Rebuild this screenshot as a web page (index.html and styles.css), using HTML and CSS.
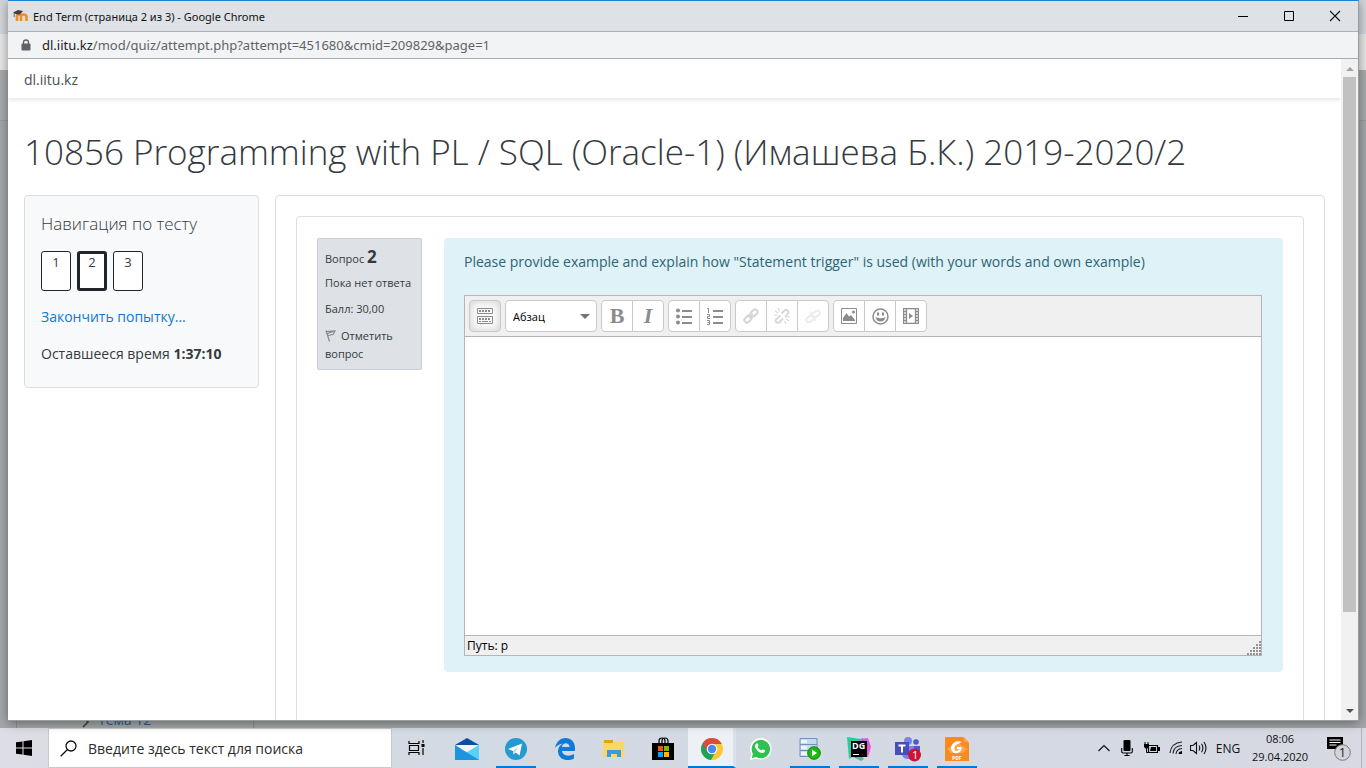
FILE: index.html
```html
<!DOCTYPE html>
<html lang="ru">
<head>
<meta charset="utf-8">
<meta name="viewport" content="width=device-width, initial-scale=1">
<title>End Term (страница 2 из 3)</title>
<link rel="stylesheet" href="styles.css">
</head>
<body>
<div class="desktop">
  <div class="workspace">
    <div class="backdrop" aria-hidden="true">
      <div class="backdrop-tabs"></div>
      <div class="backdrop-bar"></div>
      <div class="backdrop-nav"></div>
      <div class="backdrop-page">
        <div class="backdrop-drawer"><svg width="8" height="12" viewBox="0 0 8 12"><path d="M1 1l5 5-5 5" fill="none" stroke="#3d4042" stroke-width="1.5"/></svg><span>Тема 12</span></div>
      </div>
    </div>

    <section class="window">
      <header class="titlebar">
        <svg class="favicon" width="16" height="14" viewBox="0 0 16 14"><path d="M4 12V7.500Q4 5.500 6 5.500T8 7.500V12M8 12V7.500Q8 5.500 10.500 5.500T13.500 7.500V12" fill="none" stroke="#f6892b" stroke-width="2.600"/><path d="M0 3.500L5 1l5 1-3 3.500-4-.2z" fill="#45403d"/><path d="M1.200 4v4" stroke="#6d625c"/></svg>
        <span class="window-title">End Term (страница 2 из 3) - Google Chrome</span>
        <button class="win-btn" aria-label="Свернуть"><svg width="12" height="12" viewBox="0 0 12 12"><path d="M1 6.500h10" stroke="#000"/></svg></button>
        <button class="win-btn" aria-label="Развернуть"><svg width="12" height="12" viewBox="0 0 12 12"><path d="M1.500 1.500h9v9h-9z" fill="none" stroke="#000"/></svg></button>
        <button class="win-btn" aria-label="Закрыть"><svg width="12" height="12" viewBox="0 0 12 12"><path d="M1 1l10 10M11 1L1 11" stroke="#111" stroke-width="1.100"/></svg></button>
      </header>
      <div class="urlbar">
        <svg width="10" height="12" viewBox="0 0 10 12"><path d="M2.500 5V3.500a2.500 2.500 0 0 1 5 0V5" fill="none" stroke="#5f6368" stroke-width="1.300"/><rect x=".5" y="4.500" width="9" height="7" rx="1" fill="#5f6368"/></svg>
        <span class="url"><span class="url-host">dl.iitu.kz</span>/mod/quiz/attempt.php?attempt=451680&amp;cmid=209829&amp;page=1</span>
      </div>

      <div class="viewport">
        <div class="page">
          <nav class="navbar"><a class="brand" href="#">dl.iitu.kz</a></nav>
          <h1 class="course-title">10856 Programming with PL / SQL (Oracle-1) (Имашева Б.К.) 2019-2020/2</h1>
          <div class="columns">
            <aside class="quiz-nav">
              <h2 class="quiz-nav-title">Навигация по тесту</h2>
              <div class="quiz-nav-pages">
                <a class="page-btn" href="#">1</a>
                <a class="page-btn page-btn-current" href="#">2</a>
                <a class="page-btn" href="#">3</a>
              </div>
              <a class="finish" href="#">Закончить попытку...</a>
              <div class="timer">Оставшееся время <b>1:37:10</b></div>
            </aside>
            <main class="region">
              <div class="card">
                <div class="info">
                  <h3 class="info-no">Вопрос <b>2</b></h3>
                  <div class="info-state">Пока нет ответа</div>
                  <div class="info-grade">Балл: 30,00</div>
                  <a class="info-flag" href="#"><svg width="12" height="13" viewBox="0 0 12 13"><path d="M1 1.500L4.500 12.500M1.500 2.500L10 2 8 5.500 3 6.500M2.500 4.500L8 2.500" fill="none" stroke="#85888c" stroke-width="1.200"/></svg>Отметить вопрос</a>
                </div>
                <div class="formulation">
                  <label class="question" for="answer">Please provide example and explain how "Statement trigger" is used (with your words and own example)</label>
                  <div class="editor">
                    <div class="toolbar">
                      <div class="group group-active"><button class="tool" aria-label="Переключатель панели"><svg width="16" height="16" viewBox="0 0 16 16"><path d="M.5.500h15v5H.5zM.5 8.500h15v7H.5z" fill="none" stroke="#8c8c8c"/><path d="M2 3h12" stroke="#8c8c8c" stroke-width="2" stroke-dasharray="2 1"/><path d="M2 11h12" stroke="#8c8c8c" stroke-width="2" stroke-dasharray="2 1"/><path d="M2 13.500h2M5 13.500h6M12 13.500h2" stroke="#8c8c8c"/></svg></button></div>
                      <div class="group format">
                        <select class="format-select" aria-label="Формат"><option>Абзац</option></select>
                        <svg class="format-arrow" width="10" height="5" viewBox="0 0 10 5"><path d="M0 0h10L5 5z" fill="#767676"/></svg>
                      </div>
                      <div class="group">
                        <button class="tool tool-bold">B</button>
                        <button class="tool tool-italic">I</button>
                      </div>
                      <div class="group">
                        <button class="tool" aria-label="Маркированный список"><svg width="17" height="17" viewBox="0 0 17 17"><g fill="#8c8c8c"><circle cx="2" cy="2.500" r="2"/><circle cx="2" cy="8.500" r="2"/><circle cx="2" cy="14.500" r="2"/><path d="M6 2h10v2H6zM6 8h10v2H6zM6 14h10v2H6z"/></g></svg></button>
                        <button class="tool" aria-label="Нумерованный список"><svg width="17" height="17" viewBox="0 0 17 17"><path d="M6 2h10v2H6zM6 8h10v2H6zM6 14h10v2H6z" fill="#8c8c8c"/><path d="M0 .500h1.500V5M0 6.500h2.500v2H.5v2H3M0 12.500h2.500v4H0M.5 14.500h2" fill="none" stroke="#8c8c8c"/></svg></button>
                      </div>
                      <div class="group">
                        <button class="tool" disabled aria-label="Ссылка"><svg width="16" height="16" viewBox="0 0 16 16"><g fill="none" stroke="#d5d5d5" stroke-width="2"><rect x="-4" y="-2.500" width="8" height="5" rx="2.500" transform="translate(5 11) rotate(-45)"/><rect x="-4" y="-2.500" width="8" height="5" rx="2.500" transform="translate(11 5) rotate(-45)"/><path d="M6 10l4-4"/></g></svg></button>
                        <button class="tool" disabled aria-label="Удалить ссылку"><svg width="16" height="16" viewBox="0 0 16 16"><g fill="none" stroke="#d8d8d8" stroke-width="2"><path d="M6.500 7.500L2 11.500q-1 1.500.5 2.700t3 .3L9 10.500M7.500 5.500l3-3q1.500-1.300 3 0t.5 3l-3 3.500"/><path d="M1 3l3 2M4 0l1.500 3.500M0 7h3M12 16l-1.500-3M15 13l-3-2M16 9h-3" stroke-width="1.200"/></g></svg></button>
                        <button class="tool" disabled aria-label="Запретить автоссылки"><svg width="16" height="16" viewBox="0 0 16 16"><g fill="none" stroke="#ececec" stroke-width="2"><rect x="-4" y="-2.500" width="8" height="5" rx="2.500" transform="translate(5 11) rotate(-35)"/><rect x="-4" y="-2.500" width="8" height="5" rx="2.500" transform="translate(11 6) rotate(-35)"/><path d="M5 4l6 9"/></g></svg></button>
                      </div>
                      <div class="group">
                        <button class="tool" aria-label="Изображение"><svg width="16" height="16" viewBox="0 0 16 16"><path d="M.5.500h15v15H.5z" fill="none" stroke="#8c8c8c"/><path d="M2 13V10l3.500-5L8 8.500 10 7l4 5v1z" fill="#8c8c8c"/><circle cx="12.500" cy="4" r="1.500" fill="#8c8c8c"/></svg></button>
                        <button class="tool" aria-label="Смайлик"><svg width="17" height="17" viewBox="0 0 17 17"><circle cx="8.500" cy="8.500" r="7.500" fill="none" stroke="#8c8c8c" stroke-width="1.500"/><path d="M5 4.500h2v3H5zM10 4.500h2v3h-2z" fill="#8c8c8c"/><path d="M3.500 9q5 2.500 10 0-1 4.500-5 4.500T3.500 9z" fill="#8c8c8c"/></svg></button>
                        <button class="tool" aria-label="Медиа"><svg width="16" height="16" viewBox="0 0 16 16"><path d="M.5.500h15v15H.5zM3.500.500v15M12.500.500v15M.5 3.500h3M.5 6.500h3M.5 9.500h3M.5 12.500h3M12.500 3.500h3M12.500 6.500h3M12.500 9.500h3M12.500 12.500h3" fill="none" stroke="#8c8c8c" stroke-width="1.300"/><path d="M6 5v6l4-3z" fill="#8c8c8c"/></svg></button>
                      </div>
                    </div>
                    <textarea class="answer" id="answer"></textarea>
                    <div class="statusbar"><span>Путь: p</span>
                      <svg width="14" height="14" viewBox="0 0 14 14"><path d="M12 1h2M9 4h5M6 7h8M3 10h11M0 13h14" stroke="#929292" stroke-width="2" stroke-dasharray="2 1"/></svg>
                    </div>
                  </div>
                </div>
              </div>
            </main>
          </div>
        </div>
        <div class="scrollbar" aria-hidden="true">
          <svg width="8" height="4" viewBox="0 0 8 4"><path d="M4 0l4 4H0z" fill="#a3a3a3"/></svg>
          <div class="track"><div class="thumb"></div></div>
          <svg width="8" height="4" viewBox="0 0 8 4"><path d="M0 0h8L4 4z" fill="#505050"/></svg>
        </div>
      </div>
    </section>
  </div>

  <footer class="taskbar">
    <button class="start" aria-label="Пуск"><svg width="16" height="16" viewBox="0 0 16 16"><path d="M0 2.300l6.500-.9v6.100H0zM7.500 1.200L16 0v7.500H7.500zM0 8.500h6.500v6.100L0 13.700zM7.500 8.500H16V16l-8.500-1.200z"/></svg></button>
    <label class="search">
      <svg width="17" height="17" viewBox="0 0 17 17"><circle cx="11" cy="6" r="5" fill="none" stroke="#111" stroke-width="1.300"/><path d="M7.500 9.500L.7 16.300" stroke="#111" stroke-width="1.300"/></svg>
      <input class="search-input" type="text" aria-label="Поиск" placeholder="Введите здесь текст для поиска">
    </label>
    <button class="taskview" aria-label="Представление задач"><svg width="17" height="16" viewBox="0 0 17 16"><path d="M1 1v2.500h10V1M1 15v-2.500h10V15M1.500 5.500h9v5h-9zM15 0v3M15 8v7" fill="none" stroke="#000" stroke-width="1.200"/><path d="M13.500 4h3v3h-3z"/></svg></button>
    <div class="apps">
      <button class="app" aria-label="Почта"><svg width="24" height="24" viewBox="0 0 24 24"><path d="M0 8l12-7 12 7z" fill="#0a4fa0"/><path d="M2 8h20v8H2z" fill="#f4f4f4"/><path d="M0 8l12 9 12-9v15H0z" fill="#2fb5ef"/><path d="M24 8L11 15.800 24 23z" fill="#54d3fa"/><path d="M0 8l24 15H0z" fill="#1d94dd"/></svg></button>
      <button class="app app-open" aria-label="Telegram"><svg width="24" height="24" viewBox="0 0 24 24"><circle cx="12" cy="12" r="11" fill="#219bd2"/><path d="M4 12l14-5.500-2.500 12-4-3-2 2-.5-3.500z" fill="#fff"/><path d="M9 14l6-5-4 6-1.500 2z" fill="#b8d6e8"/></svg></button>
      <button class="app" aria-label="Edge"><svg width="24" height="24" viewBox="0 0 24 24"><path d="M2 11C3.500 4 8 1 12.500 1 18 1 22 5 22 11v3H9c.3 4 6 6.500 12 3v4.500c-6 3-15 2-16-6.500-.4-4 2-7 5-8.500-3.500.5-6 2-8 4.500zm7-1h7.500C16.500 5 9.500 5 9 10z" fill="#0f7bd8"/></svg></button>
      <button class="app" aria-label="Проводник"><svg width="24" height="24" viewBox="0 0 24 24"><path d="M1 3h9l1 2h11v15H1z" fill="#fdd668"/><path d="M2 3h9v3H2z" fill="#e2a116"/><path d="M5 20v-7h14v7h-4v-3H9v3z" fill="#3d9ae0"/></svg></button>
      <button class="app" aria-label="Магазин"><svg width="24" height="24" viewBox="0 0 24 24"><path d="M8 7V4q0-3 3-3t3 3v3M11 7V4q0-3 3-3t3 3v3" fill="none" stroke="#000" stroke-width="1.200"/><path d="M1 6h22v17H1z"/><path d="M7 9h5v5H7z" fill="#f2502a"/><path d="M13 9h5v5h-5z" fill="#7fba00"/><path d="M7 15h5v5H7z" fill="#06a4ef"/><path d="M13 15h5v5h-5z" fill="#ffb900"/></svg></button>
      <button class="app app-open app-current" aria-label="Chrome"><svg width="24" height="24" viewBox="0 0 24 24"><circle cx="12" cy="12" r="11" fill="#fbc934"/><path d="M12 12L2.500 6.500A11 11 0 0 0 11 23l5-9z" fill="#1da25b"/><path d="M2.500 6.500a11 11 0 0 1 19.300.5H12l-5 7z" fill="#dc4b3f"/><circle cx="12" cy="12" r="5.300" fill="#fff"/><circle cx="12" cy="12" r="4.200" fill="#4a88f0"/></svg></button>
      <button class="app" aria-label="WhatsApp"><svg width="24" height="24" viewBox="0 0 24 24"><path d="M1 23l1.300-6A10.800 10.800 0 1 1 7 21.500z" fill="#fff"/><path d="M2.800 21.200l1.100-4.500A9.200 9.200 0 1 1 7.200 20z" fill="#2bc24f"/><path d="M7.500 6.500c1-.7 1.500 0 2 1.800.2.700-.8 1.200-.7 1.700.8 1.700 2 2.700 3.600 3.300.5.100 1-1.100 1.500-1.100 1.700.7 2.500 1 2.100 2-1 3-5 1.800-7.500-.5S5 8 7.500 6.500z" fill="#fff"/></svg></button>
      <button class="app app-open" aria-label="SQL"><svg width="24" height="24" viewBox="0 0 24 24"><path d="M2 1.500h17v18H2z" fill="#c3daf5" stroke="#7191c0"/><path d="M3 3h6v3H3zM3 9h6v3H3zM3 15h6v3H3z" fill="#eef5fd"/><path d="M2 7.500h17M2 13.500h17" stroke="#7191c0"/><circle cx="16" cy="16" r="6.300" fill="#18bd08" stroke="#168211"/><path d="M14 12.500v7l5-3.500z" fill="#fff"/></svg></button>
      <button class="app app-open" aria-label="DataGrip"><svg width="24" height="24" viewBox="0 0 24 24"><path d="M0 0l14 2-2 14-10 6z" fill="#28cf9b"/><path d="M12 2l9-1 3 9-3 10-8-1z" fill="#ef55d8"/><path d="M2 18l9-4 6 8-3 2z" fill="#57b9a1"/><path d="M15 1l6 4v5h-8z" fill="#7c7ce9"/><path d="M4 4h16v16H4z"/><text class="dg-text" x="5" y="12">DG</text><path d="M6 17h6v1H6z" fill="#fff"/></svg></button>
      <button class="app app-open" aria-label="Teams"><svg width="26" height="26" viewBox="0 0 26 26"><circle cx="13" cy="5" r="4" fill="#7b83eb"/><circle cx="21" cy="6" r="2.800" fill="#5059c9"/><path d="M17 10h8v6q0 5-5 5z" fill="#5059c9"/><path d="M7 10h12v7q0 6-6 6t-6-6z" fill="#7b83eb"/><path d="M0 6h14v13H0z" fill="#464eb8"/><path d="M3.500 8.500h7v2H8v6H6v-6H3.500z" fill="#fff"/><circle cx="19.500" cy="19" r="6.500" fill="#cf1237"/><text class="badge-text" x="17" y="23">1</text></svg></button>
      <button class="app app-open" aria-label="Foxit PDF"><svg width="24" height="24" viewBox="0 0 24 24"><path d="M0 0h18l6 6v18H0z" fill="#fa8b20"/><path d="M19 0l5 5h-5z" fill="#f3a75c"/><path d="M12 5L2 12l4 4h12l4-4z" fill="#fba652"/><path d="M17 5q-6-2-9 1.500t-1.500 7Q8.500 17 13 16q4-1.500 3.500-6H12v2h2q-1 2.500-3 2t-1.500-3.500T14 6.500z" fill="#fff"/><text class="pdf-text" x="7" y="23">PDF</text></svg></button>
    </div>
    <div class="tray">
      <button class="tray-btn" aria-label="Скрытые значки"><svg width="12" height="8" viewBox="0 0 12 8"><path d="M.5 7L6 1.500 11.500 7" fill="none" stroke="#111" stroke-width="1.200"/></svg></button>
      <button class="tray-btn" aria-label="Микрофон"><svg width="12" height="16" viewBox="0 0 12 16"><rect x="2.500" y="0" width="7" height="11" rx="1"/><path d="M.7 8v3.500q0 1.500 1.500 1.500h7.600q1.500 0 1.500-1.500V8M6 13v2.500M3.500 15.500h5" fill="none" stroke="#000" stroke-width="1.100"/></svg></button>
      <button class="tray-btn tray-wide" aria-label="Батарея"><svg width="17" height="12" viewBox="0 0 17 12"><path d="M5.500 3.500h9v7h-9z" fill="none" stroke="#000" stroke-width="1.200"/><path d="M8 5h5v4H7zM15 5h2v4h-2zM1 2h5v3L4.500 6.500h-2L1 5zM1.500 0h1v2h-1zM4.500 0h1v2h-1z"/><path d="M3.500 6v4.500h2" fill="none" stroke="#000"/></svg></button>
      <button class="tray-btn" aria-label="Wi-Fi"><svg width="14" height="14" viewBox="0 0 14 14"><path d="M1 12Q2 2 13 1M4 12.500Q4.500 5 13 4.500M7 13Q7.500 8 13 7.500" fill="none" stroke="#222" stroke-width="1.100"/><path d="M9.500 13q0-2.500 3.500-3v3z"/></svg></button>
      <button class="tray-btn" aria-label="Громкость"><svg width="17" height="14" viewBox="0 0 17 14"><path d="M.5 4.500h2.500L6.500 1.500v11L3 9.500H.5zM9 4.500q1.500 2.500 0 5M11.500 2.800q2.800 4.200 0 8.400M14 1q4 6 0 12" fill="none" stroke="#111" stroke-width="1.100"/></svg></button>
      <button class="tray-lang">ENG</button>
      <time class="clock" datetime="2020-04-29T08:06"><span>08:06</span><span>29.04.2020</span></time>
      <button class="notify" aria-label="Уведомления"><svg width="26" height="26" viewBox="0 0 26 26"><path d="M1 2h16v12h-4l-4 4v-4H1z"/><path d="M3.500 5h11M3.500 7.500h11M3.500 10h7" stroke="#fff"/><circle cx="16.500" cy="17.500" r="7.800" fill="#d3d5db" stroke="#777b80"/><text class="notify-text" x="13" y="22">1</text></svg></button>
    </div>
  </footer>
</div>
</body>
</html>
```

FILE: styles.css
```css
* { box-sizing: border-box; }
body { margin: 0; font-family: "Open Sans", "Noto Sans", sans-serif; font-size: 14px; color: #343a40; }
button { padding: 0; border: 0; background: none; font: inherit; color: inherit; display: flex; align-items: center; justify-content: center; }
a { color: inherit; text-decoration: none; }
svg { flex: none; }

.desktop { height: 100vh; display: flex; flex-direction: column; overflow: hidden; }
.workspace { flex: 1; min-height: 0; display: flex; position: relative; padding: 0 7px 7px 8px; }

.backdrop { position: absolute; inset: 0; display: flex; flex-direction: column; }
.backdrop-tabs { height: 34px; background: #d3d6da; }
.backdrop-bar { height: 36px; background: #e7e7e8; }
.backdrop-nav { height: 51px; background: #a8abad; border-bottom: 1px solid #989b9d; }
.backdrop-page { flex: 1; display: flex; background: #a4a7a9; padding: 0 16px; }
.backdrop-drawer { width: 238px; display: flex; align-items: flex-end; gap: 8px; padding-left: 65px; border: solid #8e9193; border-width: 0 1px; color: #255d9c; line-height: 16px; }

.window { position: relative; flex: 1; min-width: 0; display: flex; flex-direction: column; background: #fff; border-top: 1px solid #1883d7; border-right: 1px solid #9a9d9f; border-bottom: 1px solid #9a9d9f; box-shadow: 0 2px 10px rgba(0, 0, 0, .4); }
.titlebar { height: 31px; flex: none; display: flex; align-items: center; background: #dee1e6; border-bottom: 1px solid #adb1b5; padding-left: 5px; }
.window-title { flex: 1; margin-left: 4px; font-family: "Noto Sans", sans-serif; font-size: 11px; color: #111; }
.win-btn { width: 46px; height: 30px; }
.urlbar { height: 27px; flex: none; display: flex; align-items: center; gap: 11px; padding-left: 13px; background: #f1f3f4; border-bottom: 1px solid #a9acaf; color: #5f6368; font-family: "Noto Sans", sans-serif; font-size: 13px; }
.url-host { color: #202124; }

.viewport { flex: 1; min-height: 0; display: flex; }
.page { flex: 1; min-width: 0; overflow: hidden; display: flex; flex-direction: column; }
.navbar { height: 39px; flex: none; display: flex; align-items: center; padding: 2px 16px 0; box-shadow: 0 2px 4px rgba(0, 0, 0, .1); }
.brand { color: #495057; }
.course-title { margin: 0; padding: 31px 16px 20px; font-size: 35px; line-height: 46px; font-weight: 300; white-space: nowrap; color: #343a40; }
.columns { flex: 1; display: flex; align-items: flex-start; gap: 16px; padding: 0 16px; }

.quiz-nav { width: 235px; flex: none; padding: 16px 16px 23px; border: 1px solid #dcdee0; border-radius: 4px; background: #f8f9fa; }
.quiz-nav-title { margin: 0 0 15px; font-size: 17px; line-height: 24px; font-weight: 300; }
.quiz-nav-pages { display: flex; gap: 6px; margin-bottom: 16px; }
.page-btn { width: 30px; height: 40px; border: 1px solid #212529; border-radius: 3px; background: #fff; text-align: center; font-size: 13px; line-height: 20px; }
.page-btn-current { border-width: 3px; line-height: 16px; }
.finish { display: block; margin-bottom: 17px; line-height: 20px; color: #1177d1; }
.timer { line-height: 20px; white-space: nowrap; }

.region { flex: 1; min-width: 0; padding: 20px; border: 1px solid #dcdee0; border-radius: 4px; }
.card { min-height: 560px; display: flex; align-items: flex-start; gap: 22px; padding: 21px 20px; border: 1px solid #dcdee0; border-radius: 4px; }
.info { width: 105px; flex: none; padding: 7px 7px 6px; border: 1px solid #cacdd6; border-radius: 2px; background: #dee2e6; font-size: 11px; line-height: 18px; }
.info-no { margin: 0 0 5px; font-size: 11px; line-height: 21px; font-weight: 400; }
.info-no b { font-size: 17px; }
.info-state { margin-bottom: 8px; white-space: nowrap; }
.info-grade { margin-bottom: 9px; }
.info-flag { display: block; }
.info-flag svg { margin-right: 4px; vertical-align: -2px; }

.formulation { flex: 1; min-width: 0; padding: 13px 21px 16px 20px; border-radius: 4px; background: #def2f8; }
.question { display: block; margin-bottom: 22px; line-height: 22px; color: #2f6473; }
.editor { display: flex; flex-direction: column; border: 1px solid #b5b5b5; }
.toolbar { display: flex; flex-wrap: wrap; gap: 4px; padding: 4px; background: #f0f0f0; border-bottom: 1px solid #b5b5b5; }
.group { display: flex; height: 32px; border: 1px solid #c9c9c9; border-radius: 4px; background: #fff; overflow: hidden; }
.group-active { background: #fafafa; box-shadow: inset 0 0 8px #ccc; }
.tool { width: 30px; color: #8c8c8c; }
.tool + .tool { width: 31px; border-left: 1px solid #c9c9c9; }
.tool-bold, .tool-italic { font: 700 22px "Liberation Serif", serif; }
.tool-italic { font-style: italic; }
.format { display: grid; width: 92px; align-items: center; }
.format-select { grid-area: 1 / 1; height: 30px; padding: 0 7px; border: 0; background: none; appearance: none; font: 11px "Open Sans", sans-serif; color: #000; }
.format-arrow { grid-area: 1 / 1; justify-self: end; margin-right: 6px; pointer-events: none; }
.answer { display: block; width: 100%; height: 298px; border: 0; padding: 8px; resize: none; outline: 0; font: inherit; background: #fff; }
.statusbar { height: 20px; display: flex; align-items: center; justify-content: space-between; padding-left: 2px; background: #f0f0f0; border-top: 1px solid #b5b5b5; font-size: 12px; color: #000; }
.statusbar svg { align-self: flex-end; }

.scrollbar { width: 17px; flex: none; display: flex; flex-direction: column; align-items: center; gap: 6px; padding: 8px 2px 7px; background: #f1f1f1; }
.track { flex: 1; width: 13px; }
.thumb { height: calc(86% - 3px); background: #c1c1c1; }

.taskbar { height: 40px; flex: none; display: flex; background: linear-gradient(90deg, #dddde4, #d2dae3 35%, #d4d9e3 75%, #d8d9e2); color: #111; }
.start { width: 48px; }
.search { width: 344px; display: flex; align-items: center; gap: 11px; padding-left: 11px; background: #fff; border: 1px solid #c7c9cc; }
.search-input { flex: 1; min-width: 0; border: 0; padding: 0; outline: 0; background: none; font: 14px "Open Sans", sans-serif; }
.search-input::placeholder { color: #2b2b2b; opacity: 1; }
.taskview { width: 48px; }
.apps { display: flex; gap: 9px; padding-left: 7px; }
.app { width: 40px; border: solid transparent; border-width: 3px 0 2px; }
.app-open { border-bottom-color: #0078d7; }
.app-current { width: 48px; margin: 0 -4px; background: #edf1f5; border-top: 0; padding: 3px 0 0 2px; border-right: 3px solid #dbe1e8; }
.dg-text { font: 700 9px "Open Sans", sans-serif; fill: #fff; }
.badge-text { font: 11px "Open Sans", sans-serif; fill: #fff; }
.pdf-text { font: 700 5px "Open Sans", sans-serif; fill: #fff; }
.tray { margin-left: auto; display: flex; padding-right: 4px; }
.tray-btn { width: 23px; }
.tray-wide { width: 26px; }
.tray-lang { width: 36px; font-size: 12px; }
.clock { width: 68px; display: flex; flex-direction: column; align-items: center; padding-top: 2px; font-size: 11px; line-height: 18px; }
.notify { width: 48px; padding-left: 2px; border-right: 1px solid #aeb3bb; }
.notify-text { font: 12px "Open Sans", sans-serif; fill: #111; }
```
